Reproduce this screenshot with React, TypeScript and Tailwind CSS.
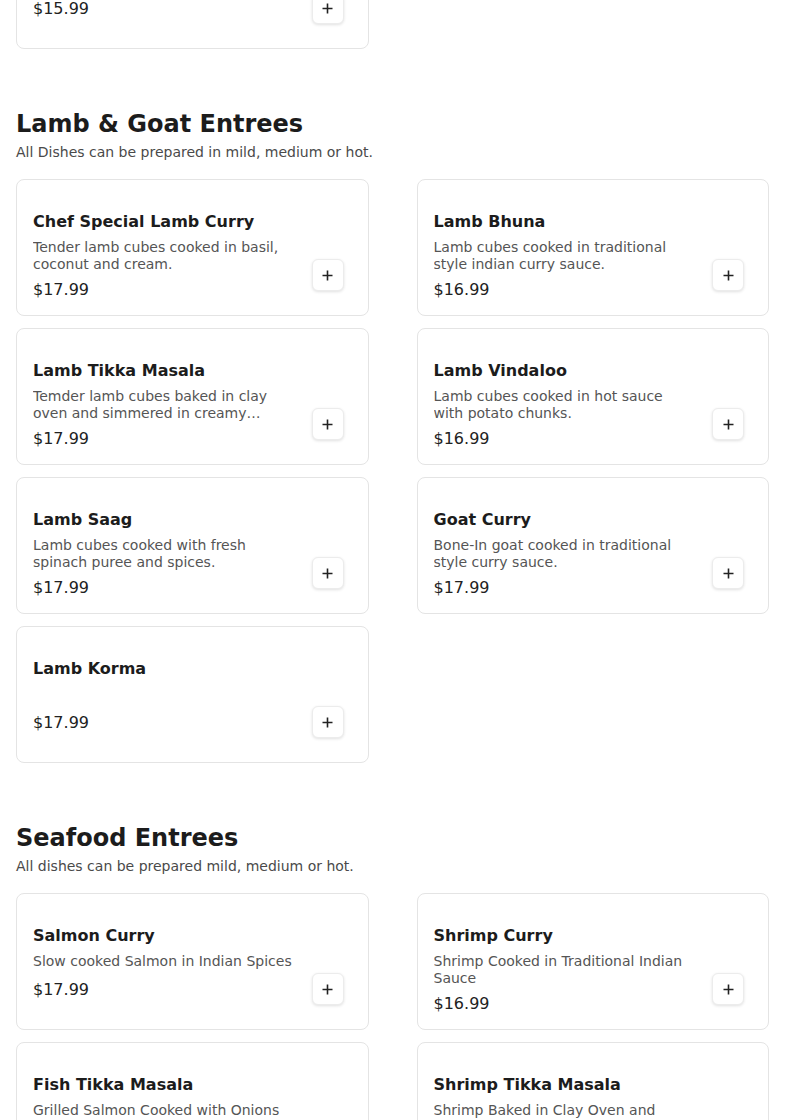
import React from "react";

interface MenuItem {
  name: string;
  description?: string;
  price: string;
}

interface MenuSection {
  title: string;
  subtitle: string;
  items: MenuItem[];
}

const sections: MenuSection[] = [
  {
    title: "Lamb & Goat Entrees",
    subtitle: "All Dishes can be prepared in mild, medium or hot.",
    items: [
      {
        name: "Chef Special Lamb Curry",
        description: "Tender lamb cubes cooked in basil, coconut and cream.",
        price: "$17.99",
      },
      {
        name: "Lamb Bhuna",
        description: "Lamb cubes cooked in traditional style indian curry sauce.",
        price: "$16.99",
      },
      {
        name: "Lamb Tikka Masala",
        description:
          "Temder lamb cubes baked in clay oven and simmered in creamy tomato sauce with herbs and spices.",
        price: "$17.99",
      },
      {
        name: "Lamb Vindaloo",
        description: "Lamb cubes cooked in hot sauce with potato chunks.",
        price: "$16.99",
      },
      {
        name: "Lamb Saag",
        description: "Lamb cubes cooked with fresh spinach puree and spices.",
        price: "$17.99",
      },
      {
        name: "Goat Curry",
        description: "Bone-In goat cooked in traditional style curry sauce.",
        price: "$17.99",
      },
      { name: "Lamb Korma", price: "$17.99" },
    ],
  },
  {
    title: "Seafood Entrees",
    subtitle: "All dishes can be prepared mild, medium or hot.",
    items: [
      {
        name: "Salmon Curry",
        description: "Slow cooked Salmon in Indian Spices",
        price: "$17.99",
      },
      {
        name: "Shrimp Curry",
        description: "Shrimp Cooked in Traditional Indian Sauce",
        price: "$16.99",
      },
      {
        name: "Fish Tikka Masala",
        description: "Grilled Salmon Cooked with Onions and Peppers in Tikka Sauce",
        price: "$17.99",
      },
      {
        name: "Shrimp Tikka Masala",
        description: "Shrimp Baked in Clay Oven and Cooked in Tikka Sauce",
        price: "$17.99",
      },
    ],
  },
];

const PlusIcon = () => (
  <svg width="11" height="11" viewBox="0 0 11 11" fill="none">
    <path d="M5.5 0.5v10M0.5 5.5h10" stroke="#222" strokeWidth="1.6" />
  </svg>
);

const ItemCard: React.FC<{ item: MenuItem }> = ({ item }) => (
  <div className="flex h-[137px] rounded-lg border border-[#e4e4e4] bg-white">
    <div className="min-w-0 flex-1 pl-4 pt-[30px]">
      <h3 className="text-base font-bold leading-6 text-[#1c1c1c]">
        {item.name}
      </h3>
      <p className="mt-[5px] line-clamp-2 min-h-[20px] text-sm leading-[17px] text-[#555]">
        {item.description}
      </p>
      <p className="mt-[5px] text-base leading-6 text-[#222]">{item.price}</p>
    </div>
    <div className="flex items-end pb-6 pl-4 pr-6">
      <button
        type="button"
        className="flex h-8 w-8 items-center justify-center rounded-md border border-[#ececec] bg-white shadow-[0_1px_3px_rgba(0,0,0,0.12)]"
      >
        <PlusIcon />
      </button>
    </div>
  </div>
);

export default function App() {
  return (
    <div
      className="min-h-screen overflow-hidden bg-white px-4"
      style={{ fontFamily: '"DejaVu Sans", sans-serif' }}
    >
      <div className="-mt-[88px] grid grid-cols-2 gap-x-12 gap-y-3">
        <ItemCard item={{ name: "Vegetable Korma", price: "$15.99" }} />
      </div>

      {sections.map((section) => (
        <section key={section.title} className="mt-[57px]">
          <h2 className="text-2xl font-bold leading-9 text-[#1c1c1c]">
            {section.title}
          </h2>
          <p className="text-sm leading-5 text-[#4a4a4a]">{section.subtitle}</p>
          <div className="mt-[17px] grid grid-cols-2 gap-x-12 gap-y-3">
            {section.items.map((item) => (
              <ItemCard key={item.name} item={item} />
            ))}
          </div>
        </section>
      ))}
    </div>
  );
}
